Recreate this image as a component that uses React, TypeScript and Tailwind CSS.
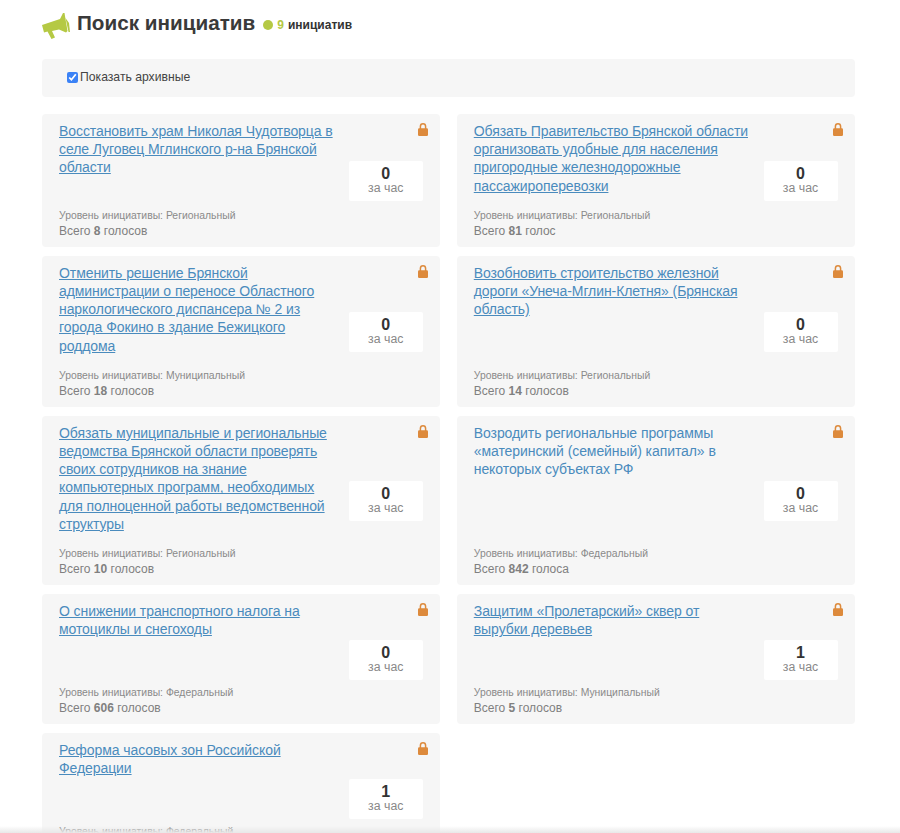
import React from "react";

type Item = { title: string; level: string; votes: string; word: string; hour: number; plain?: boolean };

const left: Item[] = [
  { title: "Восстановить храм Николая Чудотворца в селе Луговец Мглинского р-на Брянской области", level: "Региональный", votes: "8", word: "голосов", hour: 0 },
  { title: "Отменить решение Брянской администрации о переносе Областного наркологического диспансера № 2 из города Фокино в здание Бежицкого роддома", level: "Муниципальный", votes: "18", word: "голосов", hour: 0 },
  { title: "Обязать муниципальные и региональные ведомства Брянской области проверять своих сотрудников на знание компьютерных программ, необходимых для полноценной работы ведомственной структуры", level: "Региональный", votes: "10", word: "голосов", hour: 0 },
  { title: "О снижении транспортного налога на мотоциклы и снегоходы", level: "Федеральный", votes: "606", word: "голосов", hour: 0 },
  { title: "Реформа часовых зон Российской Федерации", level: "Федеральный", votes: "", word: "", hour: 1 },
];
const right: Item[] = [
  { title: "Обязать Правительство Брянской области организовать удобные для населения пригородные железнодорожные пассажироперевозки", level: "Региональный", votes: "81", word: "голос", hour: 0 },
  { title: "Возобновить строительство железной дороги «Унеча-Мглин-Клетня» (Брянская область)", level: "Региональный", votes: "14", word: "голосов", hour: 0 },
  { title: "Возродить региональные программы «материнский (семейный) капитал» в некоторых субъектах РФ", level: "Федеральный", votes: "842", word: "голоса", hour: 0, plain: true },
  { title: "Защитим «Пролетарский» сквер от вырубки деревьев", level: "Муниципальный", votes: "5", word: "голосов", hour: 1 },
];

function Lock() {
  return (
    <svg className="absolute right-[12px] top-[9px]" width="10" height="13" viewBox="0 0 10 13">
      <path d="M2.4 6V3.4a2.6 2.6 0 0 1 5.2 0V6" fill="none" stroke="#dd8a3c" strokeWidth="1.5" />
      <rect x="0" y="5.2" width="10" height="7.8" rx="1.2" fill="#dd8a3c" />
    </svg>
  );
}

function Card({ item }: { item: Item }) {
  return (
    <div className="relative flex min-h-[130px] flex-col justify-between rounded-[4px] bg-[#f6f6f6] pb-[8px] pl-[17px] pr-[17px] pt-[8px]">
      <a className={`block w-[281px] text-[14px] leading-[18.2px] tracking-[-0.08px] text-[#4a8bbd] ${item.plain ? "" : "underline"}`}>{item.title}</a>
      <div className="mt-[14px]">
        <div className="text-[10.4px] leading-[14px] text-[#8a8a8a]">Уровень инициативы: {item.level}</div>
        <div className="mt-[1px] text-[12px] leading-[15px] text-[#808080]">
          {item.votes ? (
            <>
              Всего <b>{item.votes}</b> {item.word}
            </>
          ) : (
            "\u00a0"
          )}
        </div>
      </div>
      <div className="absolute right-[17px] top-[calc(50%+0.5px)] flex h-[40px] w-[74px] -translate-y-1/2 flex-col items-center justify-center rounded-[2px] bg-white">
        <b className="text-[16px] leading-[15px] text-[#333333]">{item.hour}</b>
        <span className="text-[12.3px] leading-[14px] text-[#888888]">за час</span>
      </div>
      <Lock />
    </div>
  );
}

export default function App() {
  return (
    <div className="relative h-[833px] overflow-hidden bg-white pl-[42px] pr-[45.5px] text-[#333333] [font-family:'Liberation_Sans',Arial,sans-serif]">
      <div className="flex h-[59px] items-center pb-[12px]">
        <svg width="28" height="27" viewBox="0 0 28 27" className="mr-[7px] mt-[3px]">
          <path d="M0 13 L3 12 L18 7 L21 1 L22.5 1 L25.5 19 L24 20.5 L17 17.5 L10 19 L13 25.5 L9.5 27 L5.5 19.5 L2 20.5 Z" fill="#b5c944" />
          <path d="M23.5 6 L27 11 L28 20 L26.5 20 Z" fill="#b5c944" />
        </svg>
        <h1 className="text-[20.7px] font-bold leading-none text-[#3a3a3a]">Поиск инициатив</h1>
        <span className="ml-[8px] mr-[4px] mt-[2px] h-[10px] w-[10px] rounded-full bg-[#b5c944]" />
        <span className="mt-[2px] text-[12px] font-bold text-[#b5c944]">9</span>
        <span className="ml-[4px] mt-[2px] text-[12px] font-bold text-[#333333]">инициатив</span>
      </div>
      <div className="flex h-[38px] items-center rounded-[4px] bg-[#f6f6f6] pb-[2px] pl-[25px] text-[12.2px] text-[#444444]">
        <input type="checkbox" defaultChecked className="mr-[2px] h-[11px] w-[11px] accent-[#3b82f6]" />
        Показать архивные
      </div>
      <div className="mt-[17px] grid grid-cols-2 gap-x-[17px] gap-y-[9px]">
        {left.map((l, i) => (
          <React.Fragment key={i}>
            <Card item={l} />
            {right[i] ? <Card item={right[i]} /> : <div />}
          </React.Fragment>
        ))}
      </div>
      <div className="absolute bottom-0 left-0 right-0 h-[7px] bg-gradient-to-b from-transparent to-[#e8e8e8]" />
    </div>
  );
}
